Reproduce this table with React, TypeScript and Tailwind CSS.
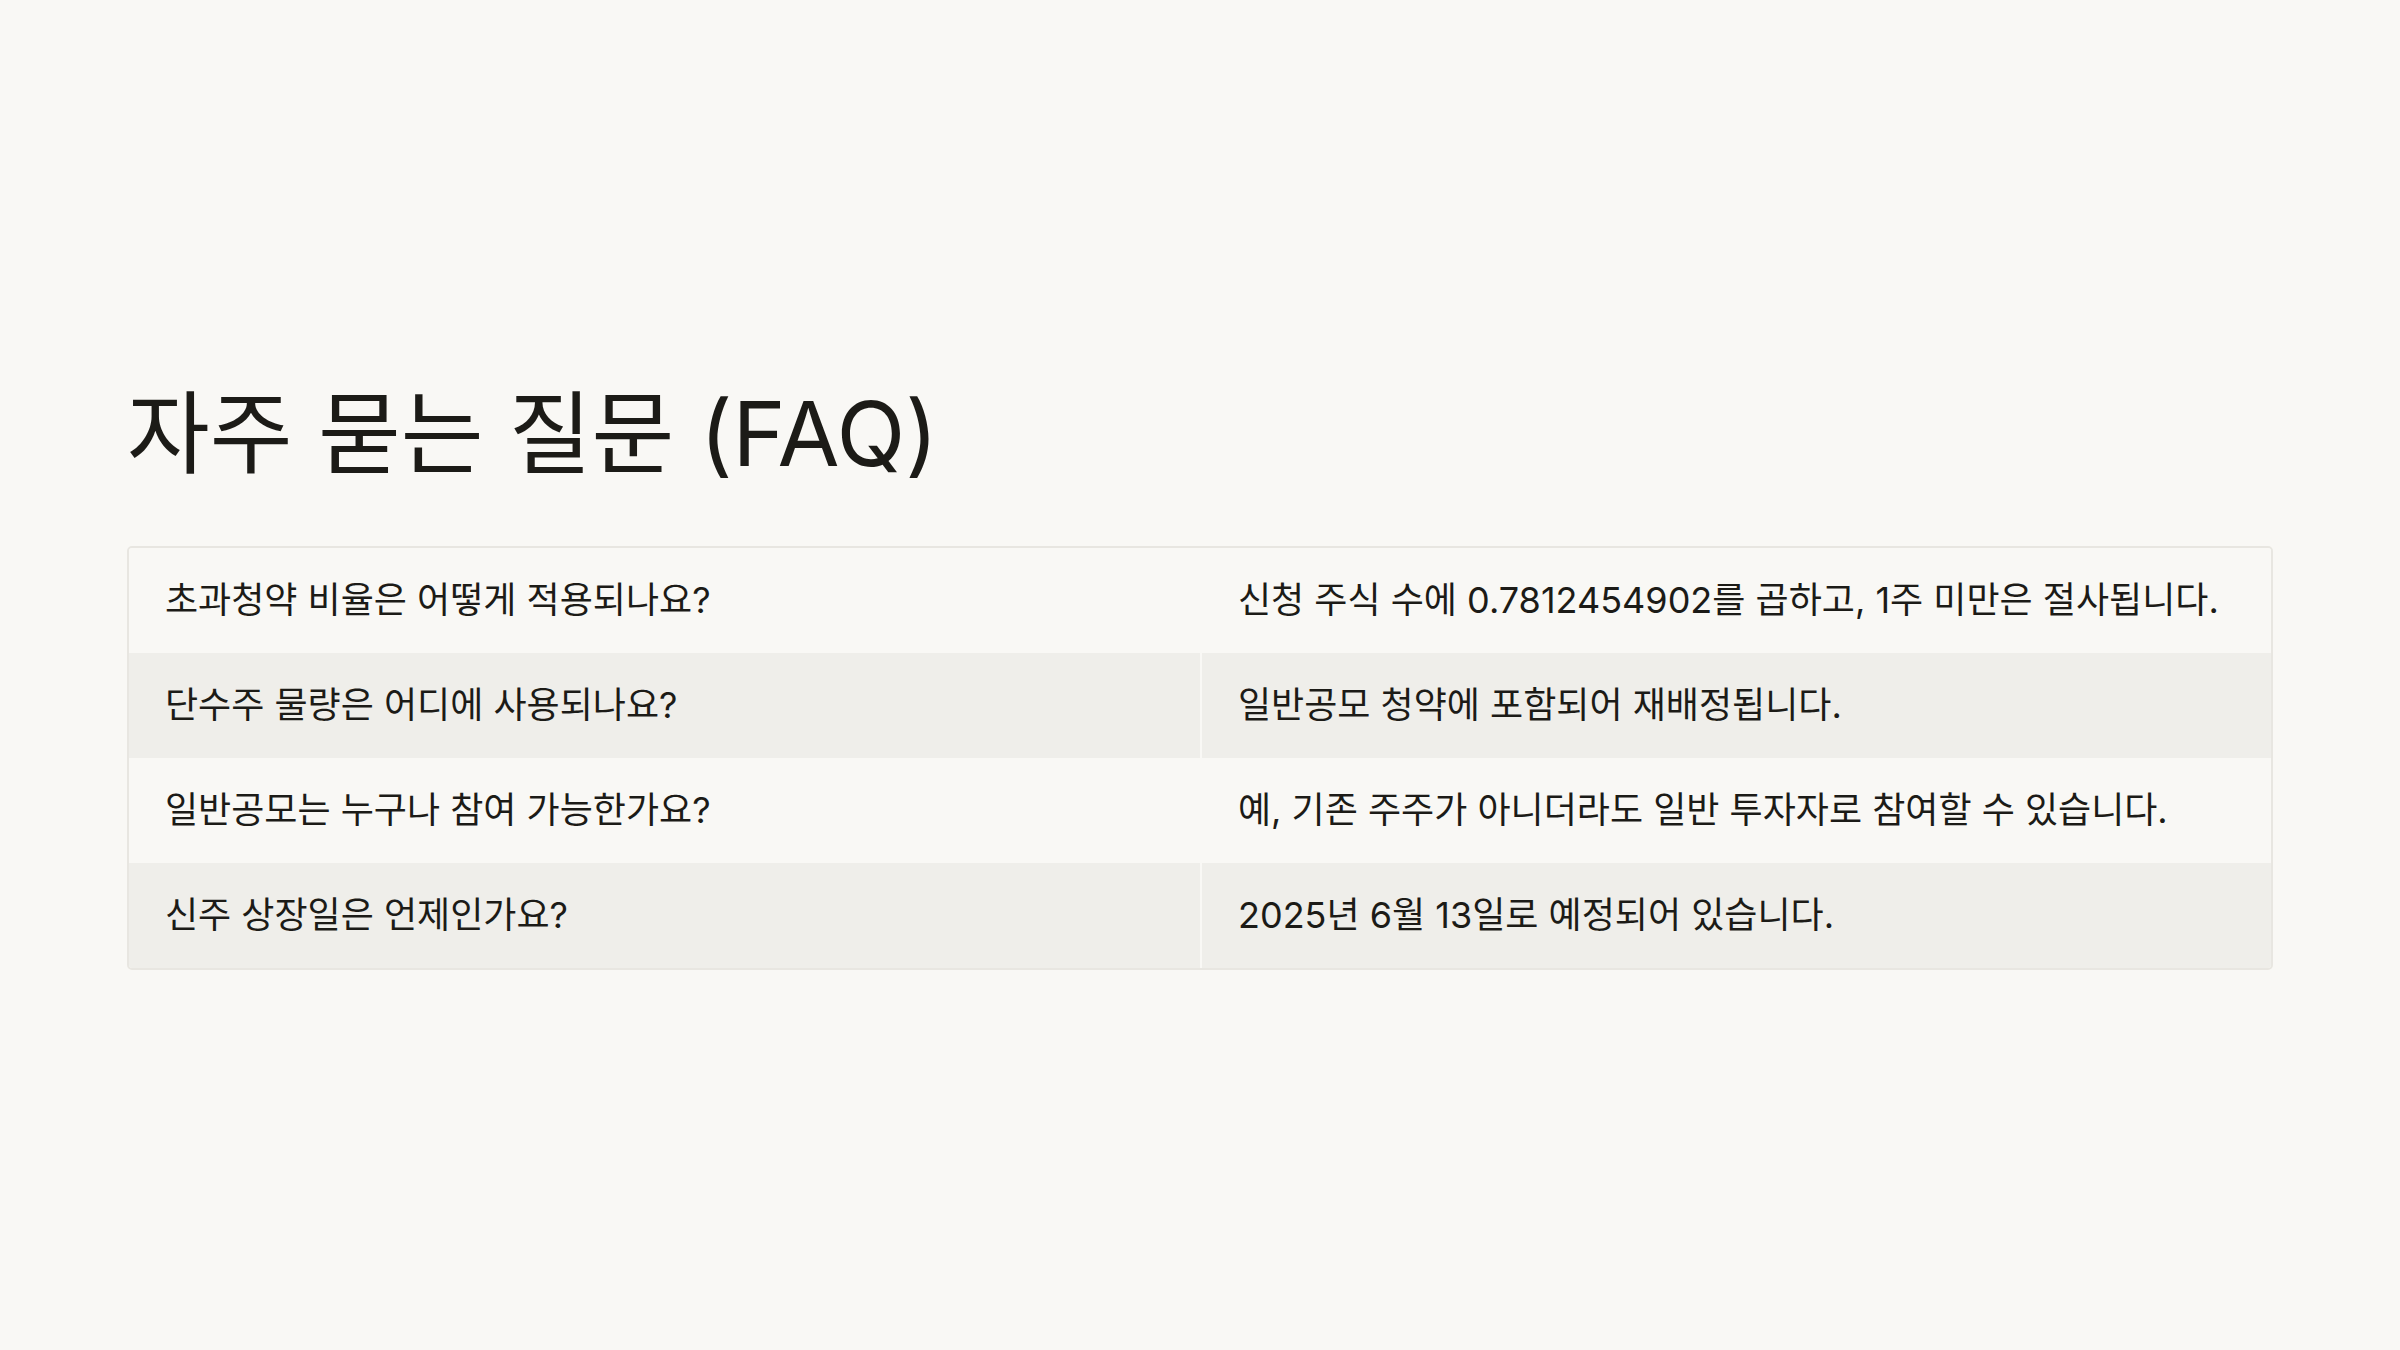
import React from "react";

const rows: [string, string][] = [
  ["초과청약 비율은 어떻게 적용되나요?", "신청 주식 수에 0.7812454902를 곱하고, 1주 미만은 절사됩니다."],
  ["단수주 물량은 어디에 사용되나요?", "일반공모 청약에 포함되어 재배정됩니다."],
  ["일반공모는 누구나 참여 가능한가요?", "예, 기존 주주가 아니더라도 일반 투자자로 참여할 수 있습니다."],
  ["신주 상장일은 언제인가요?", "2025년 6월 13일로 예정되어 있습니다."],
];

export default function App() {
  return (
    <div
      className="w-full h-screen bg-[#f9f8f5] text-[#1c1b17] flex flex-col justify-center px-[127px]"
      style={{ fontFamily: 'Inter, "Noto Sans CJK KR", sans-serif' }}
    >
      <h1 className="text-[90px] leading-[108px] font-normal mb-[58px]">
        자주 묻는 질문 (FAQ)
      </h1>
      <div className="border-2 border-[#e8e6e1] rounded-[5px] overflow-hidden">
        {rows.map(([q, a], i) => (
          <div
            key={i}
            className={`grid grid-cols-2 ${i % 2 === 1 ? "bg-[#efeeea]" : "bg-[#f9f8f5]"}`}
          >
            <div className="px-[36px] py-[27px] text-[36px] leading-[51px]">{q}</div>
            <div className="px-[36px] py-[27px] text-[36px] leading-[51px] border-l-2 border-[#f9f8f5]">
              {a}
            </div>
          </div>
        ))}
      </div>
    </div>
  );
}
